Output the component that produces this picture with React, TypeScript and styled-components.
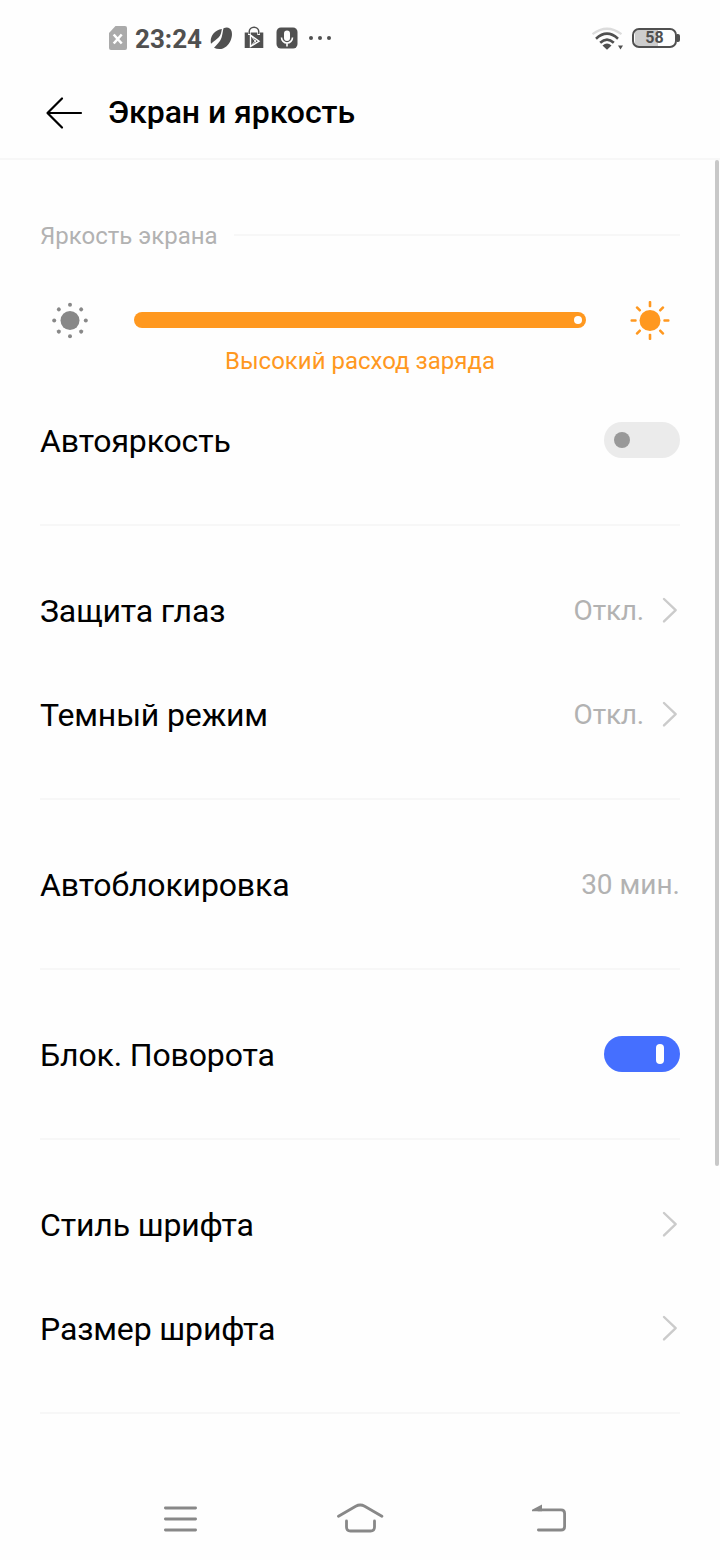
import React from "react";
import styled, { createGlobalStyle } from "styled-components";

const GlobalStyle = createGlobalStyle`
  * { box-sizing: border-box; }
  body { margin: 0; background: #fefefe; font-family: Roboto, "Noto Sans", sans-serif; }
`;

const Screen = styled.div`
  position: relative;
  width: 720px;
  height: 1560px;
  display: flex;
  flex-direction: column;
  overflow: hidden;
  background: #fefefe;
`;

const StatusBar = styled.div`
  height: 66px;
  flex: none;
  padding: 10px 40px 0 108px;
  display: flex;
  align-items: center;
  justify-content: space-between;
  color: #505050;
`;

const StatusGroup = styled.div`
  display: flex;
  align-items: center;
`;

const Clock = styled.span`
  width: 67px;
  margin: 0 8px 0 7px;
  padding-top: 2px;
  font-size: 26px;
  line-height: 30px;
  font-weight: 700;
  white-space: nowrap;
`;

const Icon = styled.svg<{ $ml?: number }>`
  display: block;
  flex: none;
  margin-left: ${({ $ml = 0 }) => $ml}px;
`;

const Battery = styled.div`
  position: relative;
  width: 45px;
  height: 20px;
  margin: 0 3px 0 7px;
  border: 2px solid #505050;
  border-radius: 7px;
  background: linear-gradient(to right, #cdcdcd 23px, transparent 23px) no-repeat 1px 0;
  font-size: 16px;
  line-height: 16px;
  font-weight: 700;
  text-align: center;
  &::after {
    content: "";
    position: absolute;
    right: -5px;
    top: 4px;
    width: 3px;
    height: 8px;
    border-radius: 0 2px 2px 0;
    background: #505050;
  }
`;

const Header = styled.header`
  height: 94px;
  flex: none;
  padding: 1px 0 0 45px;
  display: flex;
  align-items: center;
  border-bottom: 2px solid #f7f7f7;
`;

const Title = styled.h1`
  margin: -2px 0 0 25px;
  font-size: 32px;
  line-height: 40px;
  letter-spacing: -0.05px;
  font-weight: 500;
  color: #000;
`;

const Content = styled.main`
  flex: 1;
  padding: 56px 40px 0;
`;

const SectionHeading = styled.div`
  height: 40px;
  display: flex;
  align-items: center;
  gap: 16px;
  font-size: 24px;
  color: #b2b2b2;
  &::after {
    content: "";
    flex: 1;
    height: 2px;
    margin-top: -2px;
    background: #f7f7f7;
  }
`;

const Brightness = styled.div`
  height: 132px;
  padding: 44px 10px 0;
  display: grid;
  grid-template-columns: 40px 452px 40px;
  justify-content: space-between;
  grid-template-rows: 40px 41px;
  align-items: center;
`;

const Track = styled.div`
  height: 16px;
  padding-right: 4px;
  display: flex;
  align-items: center;
  justify-content: flex-end;
  border-radius: 8px;
  background: #ff981f;
`;

const Thumb = styled.span`
  width: 8px;
  height: 8px;
  border-radius: 50%;
  background: #fff;
`;

const Hint = styled.div`
  grid-column: 2;
  text-align: center;
  font-size: 24px;
  color: #ff981f;
`;

const Group = styled.section`
  padding-bottom: 32px;
  margin-bottom: 32px;
  border-bottom: 2px solid #f7f7f7;
`;

const Row = styled.div`
  height: 104px;
  display: flex;
  align-items: center;
`;

const Label = styled.span`
  flex: 1;
  padding-top: 2px;
  font-size: 32px;
  letter-spacing: -0.14px;
  color: #000;
`;

const Value = styled.span<{ $tight?: boolean }>`
  font-size: 28px;
  letter-spacing: ${({ $tight }) => ($tight ? "-0.2px" : "normal")};
  color: #b2b2b2;
`;

const Switch = styled.span<{ $on?: boolean }>`
  width: 76px;
  height: 36px;
  padding: 0 ${({ $on }) => ($on ? 16 : 10)}px;
  display: flex;
  align-items: center;
  justify-content: ${({ $on }) => ($on ? "flex-end" : "flex-start")};
  border-radius: 18px;
  background: ${({ $on }) => ($on ? "#456fff" : "#ebebeb")};
  &::before {
    content: "";
    width: ${({ $on }) => ($on ? 8 : 16)}px;
    height: ${({ $on }) => ($on ? 20 : 16)}px;
    border-radius: ${({ $on }) => ($on ? 4 : 8)}px;
    background: ${({ $on }) => ($on ? "#fff" : "#999")};
  }
`;

const Scrollbar = styled.div`
  position: absolute;
  top: 160px;
  right: 1px;
  width: 4px;
  height: 1006px;
  border-radius: 2px;
  background: #c8c8c8;
`;

const NavBar = styled.nav`
  height: 80px;
  flex: none;
  padding: 0 152px 3px 162px;
  display: flex;
  justify-content: space-between;
  align-items: center;
`;

const Chevron = () => (
  <Icon $ml={18} width="18" height="28" viewBox="0 0 18 28" fill="none" stroke="#cbcbcb" strokeWidth="2.4" strokeLinecap="round" strokeLinejoin="round">
    <path d="M2 3 L13.700 14.200 L2 25.400" />
  </Icon>
);

const angles = [0, 45, 90, 135, 180, 225, 270, 315];

const LinkRow = ({ label, value }: { label: string; value?: string }) => (
  <Row>
    <Label>{label}</Label>
    {value && <Value $tight>{value}</Value>}
    <Chevron />
  </Row>
);

export default function App() {
  return (
    <>
      <GlobalStyle />
      <Screen>
        <StatusBar>
          <StatusGroup>
            <Icon width="20" height="26" viewBox="0 0 20 26">
              <path d="M7.5 1H17a2 2 0 0 1 2 2v20a2 2 0 0 1-2 2H3a2 2 0 0 1-2-2V8z" fill="#aaa" />
              <path d="M5.7 9.5 13.7 18.5M13.7 9.5 5.7 18.5" stroke="#fff" strokeWidth="2.6" />
            </Icon>
            <Clock>23:24</Clock>
            <Icon width="22" height="24" viewBox="0 0 22 24" fill="#505050">
              <path d="M13.500 2.300C16.500.7 20.300 1 21.600 5.300c1.300 5-1 11.500-5.300 15.200-3.500 3-8.300 3.200-12.300 1.300C6 19.800 7.600 18 9.500 15.500 12.300 12 12 9 13.500 2.300z" />
              <path d="M11.900 3C11 7 11 9 8.800 11.300 6.500 13.800 4.500 14.500 1 17.800-.5 11 4 4 11.900 3z" />
            </Icon>
            <Icon $ml={12} width="20" height="24" viewBox="0 0 20 24">
              <path d="M5.200 8V6a4.800 4.800 0 0 1 9.600 0V8" fill="none" stroke="#505050" strokeWidth="1.500" />
              <path d="M.7 6.500H4V9h2.700V6.500h6.600V9H16V6.500h3.300V22H.7z" fill="#505050" />
              <path d="M6.500 9 15 15.300 6.500 20.500z" fill="#505050" stroke="#fff" strokeWidth="1.400" />
              <path d="M6.500 9 12.500 17M6.500 20.500 12.500 13.500" stroke="#fff" strokeWidth="1" />
            </Icon>
            <Icon $ml={12} width="22" height="22" viewBox="0 0 22 22" fill="none">
              <rect x=".5" y=".5" width="21" height="21" rx="4.500" fill="#505050" />
              <rect x="8" y="3.500" width="6" height="10.500" rx="3" fill="#fff" />
              <path d="M5.500 10.500a5.500 5.500 0 0 0 11 0M11 16v3.500" stroke="#fff" strokeWidth="1.600" />
            </Icon>
            <Icon $ml={10} width="24" height="6" viewBox="0 0 24 6" fill="#505050">
              <circle cx="3" cy="3" r="2" /><circle cx="12" cy="3" r="2" /><circle cx="21" cy="3" r="2" />
            </Icon>
          </StatusGroup>
          <StatusGroup>
            <Icon width="34" height="24" viewBox="0 0 34 24" fill="none" strokeWidth="2.200">
              <path d="M1.500 8.200Q16 -2.700 30.500 8.200" stroke="#dcdcdc" />
              <path d="M5 12.700Q16 2.700 27 12.700M9.200 16.800Q16 10.300 22.800 16.800" stroke="#505050" strokeWidth="2.600" />
              <path d="M11.500 19.500Q16 15.500 20.500 19.500L16 23.700z" fill="#505050" />
              <path d="M27 19.500h5l-2.500 4z" fill="#505050" />
            </Icon>
            <Battery>58</Battery>
          </StatusGroup>
        </StatusBar>

        <Header>
          <Icon width="38" height="34" viewBox="0 0 38 34" fill="none" stroke="#000" strokeWidth="2.200" strokeLinecap="round" strokeLinejoin="round">
            <path d="M17 2.500 2.500 17 17 31.500M3 17h33" />
          </Icon>
          <Title>Экран и яркость</Title>
        </Header>

        <Content>
          <SectionHeading>Яркость экрана</SectionHeading>
          <Brightness>
            <Icon width="40" height="40" viewBox="0 0 40 40" fill="#888">
              <circle cx="20" cy="20.500" r="9.500" />
              {angles.map((a) => (
                <circle key={a} cx="20" cy="4.700" r="2" transform={`rotate(${a} 20 20.5)`} />
              ))}
            </Icon>
            <Track><Thumb /></Track>
            <Icon width="40" height="40" viewBox="0 0 40 40" fill="#ff981f">
              <circle cx="20" cy="20.500" r="10.500" />
              {angles.map((a) => (
                <rect key={a} x="18.700" y="1" width="2.600" height="6.200" rx="1" transform={`rotate(${a} 20 20.5)`} />
              ))}
            </Icon>
            <Hint>Высокий расход заряда</Hint>
          </Brightness>

          <Group>
            <Row><Label>Автояркость</Label><Switch /></Row>
          </Group>
          <Group>
            <LinkRow label="Защита глаз" value="Откл." />
            <LinkRow label="Темный режим" value="Откл." />
          </Group>
          <Group>
            <Row><Label>Автоблокировка</Label><Value>30 мин.</Value></Row>
          </Group>
          <Group>
            <Row><Label>Блок. Поворота</Label><Switch $on /></Row>
          </Group>
          <Group>
            <LinkRow label="Стиль шрифта" />
            <LinkRow label="Размер шрифта" />
          </Group>
        </Content>

        <NavBar>
          <Icon width="36" height="30" viewBox="0 0 36 30" stroke="#888" strokeWidth="2.800" strokeLinecap="round">
            <path d="M3.400 4h30.200M3.400 15h30.200M3.400 26h30.200" />
          </Icon>
          <Icon width="50" height="32" viewBox="0 0 50 32" fill="none" stroke="#888" strokeWidth="2.800" strokeLinecap="round">
            <path d="M3.500 13.300 20.700 3.200Q25.200 .8 29.700 3.200L46.900 13.300M11.500 18v6q0 4 4 4h20q4 0 4-4v-6" />
          </Icon>
          <Icon width="46" height="30" viewBox="-8 0 46 30" fill="none" stroke="#888" strokeWidth="2.800" strokeLinecap="round">
            <path d="M8 5.800h23q3.600 0 3.600 3.600v13q0 3.600-3.600 3.600H8.400" />
            <path d="M2 7.200V5.700L12 .5v6.700z" fill="#888" stroke="none" />
          </Icon>
        </NavBar>
        <Scrollbar />
      </Screen>
    </>
  );
}
